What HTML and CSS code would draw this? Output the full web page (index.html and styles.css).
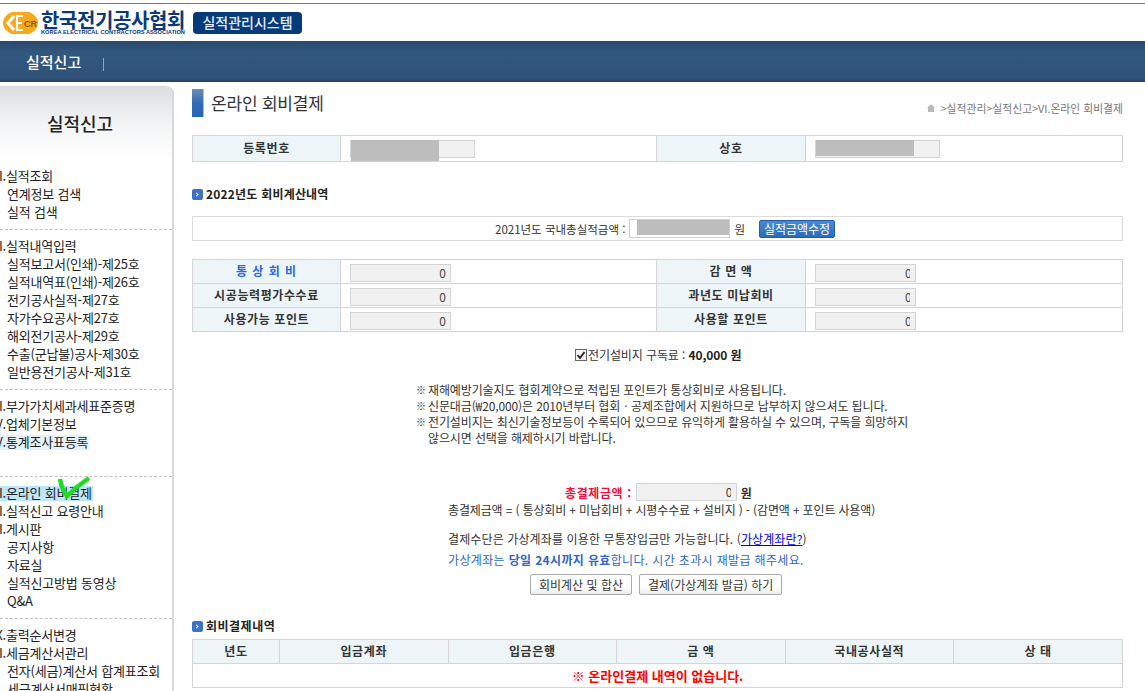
FILE: index.html
```html
<!DOCTYPE html>
<html lang="ko">
<head>
    <meta charset="UTF-8">
    <title>온라인 회비결제</title>
    <link rel="stylesheet" href="styles.css">
</head>
<body>

    <div class="top">
        <svg class="logo-mark" width="35" height="22" viewBox="0 0 35 22">
            <path d="M9 0H26C31 2 35 6 35 11C35 16 31 20 26 22H9C4 20 0 16 0 11C0 6 4 2 9 0Z" fill="#f7a81b"/>
            <path d="M11 4L5 11L11 18" fill="none" stroke="#fff" stroke-width="3"/>
            <path d="M20 4H14V18H20M14 11H19" fill="none" stroke="#fff" stroke-width="2.2"/>
            <text x="21" y="15" font-size="9" font-weight="bold" fill="#8a5a10" font-family="Liberation Sans">CR</text>
        </svg>
        <div class="logo-text">
            <div class="logo-ko">한국전기공사협회</div>
            <div class="logo-en">KOREA ELECTRICAL CONTRACTORS ASSOCIATION</div>
        </div>
        <div class="logo-badge">실적관리시스템</div>
    </div>

    <div class="nav">
        <span class="nav-item">실적신고</span>
        <span class="nav-sep"></span>
    </div>

    <div class="wrap">
        <div class="side">
            <div class="side-title">실적신고</div>

            <ul class="menu">
                <li class="m1"><span class="num">I.</span>실적조회</li>
                <li class="m2">연계정보 검색</li>
                <li class="m2">실적 검색</li>
            </ul>
            <ul class="menu">
                <li class="m1"><span class="num">II.</span>실적내역입력</li>
                <li class="m2">실적보고서(인쇄)-제25호</li>
                <li class="m2">실적내역표(인쇄)-제26호</li>
                <li class="m2">전기공사실적-제27호</li>
                <li class="m2">자가수요공사-제27호</li>
                <li class="m2">해외전기공사-제29호</li>
                <li class="m2">수출(군납불)공사-제30호</li>
                <li class="m2">일반용전기공사-제31호</li>
            </ul>
            <ul class="menu menu-b">
                <li class="m1"><span class="num">III.</span>부가가치세과세표준증명</li>
                <li class="m1"><span class="num">IV.</span>업체기본정보</li>
                <li class="m1 hl-light"><span class="num">V.</span>통계조사표등록</li>
            </ul>
            <ul class="menu">
                <li class="m1 hl"><span class="num">VI.</span>온라인 회비결제</li>
                <li class="m1"><span class="num">VII.</span>실적신고 요령안내</li>
                <li class="m1"><span class="num">VIII.</span>게시판</li>
                <li class="m2">공지사항</li>
                <li class="m2">자료실</li>
                <li class="m2">실적신고방법 동영상</li>
                <li class="m2">Q&amp;A</li>
            </ul>
            <ul class="menu">
                <li class="m1"><span class="num">IX.</span>출력순서변경</li>
                <li class="m1"><span class="num">XI.</span>세금계산서관리</li>
                <li class="m2">전자(세금)계산서 합계표조회</li>
                <li class="m2">세금계산서매핑현황</li>
            </ul>

            <svg class="check-mark" width="34" height="24" viewBox="0 0 34 24">
                <path d="M2 3C3 9 5 15 9 20C15 14 22 8 31 2" fill="none" stroke="#1fdc1f" stroke-width="4.5"/>
            </svg>
        </div>

        <div class="main">
            <div class="page-head">
                <span class="page-bar"></span>
                <h1>온라인 회비결제</h1>
                <div class="crumb">
                    <svg width="8" height="8" viewBox="0 0 8 8"><path d="M4 0L8 4H7V8H1V4H0Z" fill="#bbb"/></svg>
                    <span>&gt;실적관리&gt;실적신고&gt;VI.온라인 회비결제</span>
                </div>
            </div>

            <table class="grid first">
                <colgroup><col class="c1"><col class="c2"><col class="c3"><col></colgroup>
                <tr>
                    <th>등록번호</th>
                    <td><span class="field f125"><span class="mask m88"></span></span></td>
                    <th>상호</th>
                    <td><span class="field f125"><span class="mask m98"></span></span></td>
                </tr>
            </table>

            <h2 class="sec"><span class="sec-ico"></span>2022년도 회비계산내역</h2>

            <div class="amount-box">
                <span>2021년도 국내총실적금액 :</span>
                <span class="field-white"><span class="mask-white"></span></span>
                <span class="won">원</span>
                <button class="btn-blue">실적금액수정</button>
            </div>

            <table class="grid calc">
                <colgroup><col class="c1"><col class="c2"><col class="c3"><col></colgroup>
                <tr>
                    <th class="blue">통 상 회 비</th>
                    <td><span class="field f101">0</span></td>
                    <th>감 면 액</th>
                    <td><span class="field f101 cut"><span>0</span></span></td>
                </tr>
                <tr>
                    <th>시공능력평가수수료</th>
                    <td><span class="field f101">0</span></td>
                    <th>과년도 미납회비</th>
                    <td><span class="field f101 cut"><span>0</span></span></td>
                </tr>
                <tr>
                    <th>사용가능 포인트</th>
                    <td><span class="field f101">0</span></td>
                    <th>사용할 포인트</th>
                    <td><span class="field f101 cut"><span>0</span></span></td>
                </tr>
            </table>

            <div class="subscribe">
                <svg class="chk" width="12" height="12" viewBox="0 0 12 12">
                    <rect x="0.5" y="0.5" width="11" height="11" fill="#f4f4f4" stroke="#666"/>
                    <path d="M2.5 6L5 9L9.5 3" fill="none" stroke="#222" stroke-width="1.8"/>
                </svg>전기설비지 구독료 : <b>40,000 원</b>
            </div>

            <ul class="notes">
                <li>재해예방기술지도 협회계약으로 적립된 포인트가 통상회비로 사용됩니다.</li>
                <li>신문대금(₩20,000)은 2010년부터 협회ㆍ공제조합에서 지원하므로 납부하지 않으셔도 됩니다.</li>
                <li>전기설비지는 최신기술정보등이 수록되어 있으므로 유익하게 활용하실 수 있으며, 구독을 희망하지<br>않으시면 선택을 해제하시기 바랍니다.</li>
            </ul>

            <div class="total">
                <b class="red">총결제금액 :</b>
                <span class="field f101 cut"><span>0</span></span>
                <b>원</b>
            </div>
            <div class="formula">총결제금액 = ( 통상회비 + 미납회비 + 시평수수료 + 설비지 ) - (감면액 + 포인트 사용액)</div>

            <div class="pay-info">
                <p>결제수단은 가상계좌를 이용한 무통장입금만 가능합니다. (<a href="#">가상계좌란?</a>)</p>
                <p class="info-blue">가상계좌는 <b>당일 24시까지 유효</b>합니다. 시간 초과시 재발급 해주세요.</p>
            </div>

            <div class="btns">
                <button class="btn">회비계산 및 합산</button>
                <button class="btn">결제(가상계좌 발급) 하기</button>
            </div>

            <h2 class="sec sec2"><span class="sec-ico"></span>회비결제내역</h2>

            <table class="grid hist">
                <colgroup><col class="h1"><col class="h2"><col class="h2"><col class="h2"><col class="h2"><col></colgroup>
                <tr>
                    <th>년도</th>
                    <th>입금계좌</th>
                    <th>입금은행</th>
                    <th>금 액</th>
                    <th>국내공사실적</th>
                    <th>상 태</th>
                </tr>
                <tr>
                    <td colspan="6" class="empty">※ 온라인결제 내역이 없습니다.</td>
                </tr>
            </table>
        </div>
    </div>

</body>
</html>
```

FILE: styles.css
```css
html, body {
    height: 691px;
    overflow: hidden;
}
body {
    margin: 0;
    font-family: "Noto Sans CJK KR", "Noto Sans", sans-serif;
    font-size: 12px;
    color: #333;
    background-color: #fff;
}
ul {
    list-style: none;
    margin: 0;
    padding: 0;
}

/* 상단 */
.top {
    display: flex;
    align-items: center;
    box-sizing: border-box;
    height: 38px;
    margin-top: 3px;
    padding-left: 3px;
    border-top: 1px solid #777;
}
.logo-mark {
    margin-right: 3px;
}
.logo-text {
    width: 146px;
    margin-top: 1px;
}
.logo-ko {
    font-size: 20px;
    font-weight: 700;
    line-height: 18px;
    color: #0b3a78;
    letter-spacing: -0.4px;
    white-space: nowrap;
}
.logo-en {
    font-family: "Liberation Sans", sans-serif;
    font-size: 5.7px;
    font-weight: 700;
    line-height: 6px;
    color: #0b3a78;
    white-space: nowrap;
}
.logo-badge {
    width: 109px;
    height: 22px;
    margin-left: 6px;
    line-height: 21px;
    text-align: center;
    background-color: #063a78;
    border-radius: 4px;
    color: #e4eef8;
    font-size: 14px;
    font-weight: 500;
}
.nav {
    display: flex;
    align-items: center;
    height: 41px;
    padding-left: 26px;
    background: linear-gradient(#2a4a6e, #32587f 30%, #2f5278 90%, #26405e);
    color: #fff;
}
.nav-item {
    font-size: 15px;
    font-weight: 500;
    line-height: 36px;
}
.nav-sep {
    width: 1px;
    height: 13px;
    margin: 6px 0 0 22px;
    background-color: #8ea6bf;
}

/* 왼쪽 메뉴 */
.wrap {
    display: flex;
    align-items: flex-start;
}
.side {
    position: relative;
    width: 172px;
    height: 604px;
    margin-top: 4px;
    border: 1px solid #d8d8d8;
    border-left: 0;
    border-right-width: 2px;
    border-top-right-radius: 8px;
    overflow: hidden;
    color: #222;
    font-size: 13px;
    letter-spacing: -0.2px;
}
.side-title {
    box-sizing: border-box;
    height: 72px;
    margin-bottom: 8px;
    padding: 23px 12px 0 0;
    text-align: center;
    font-size: 18px;
    font-weight: 500;
    line-height: 27px;
    letter-spacing: 0;
    background: linear-gradient(#dcdfe2, #f4f5f6 55%, #fff);
}
.menu {
    margin-bottom: 7px;
    padding-bottom: 8px;
    border-bottom: 1px dashed #c4c4c4;
}
.menu:last-of-type {
    border-bottom: 0;
}
.menu-b {
    padding-bottom: 25px;
}
.menu li {
    height: 18px;
    line-height: 18px;
    white-space: nowrap;
}
.m1 {
    display: flex;
}
.m2 {
    padding-left: 7px;
}
.num {
    display: flex;
    flex: none;
    justify-content: flex-end;
    width: 6px;
    overflow: hidden;
}
.hl {
    width: 93px;
    background: linear-gradient(#bfe6fb, #bfe6fb) 0 2px / 100% 15px no-repeat;
}
.hl-light {
    width: 89px;
    background: linear-gradient(#e4f3fb, #e4f3fb) 0 2px / 100% 15px no-repeat;
}
.check-mark {
    position: absolute;
    left: 58px;
    top: 389px;
}

/* 본문 */
.main {
    width: 931px;
    margin-left: 18px;
}
.page-head {
    display: flex;
    align-items: flex-start;
    box-sizing: border-box;
    height: 53px;
    padding-top: 7px;
}
.page-bar {
    box-sizing: border-box;
    width: 12px;
    height: 28px;
    margin-right: 7px;
    background: linear-gradient(#6f8db0, #2f6cb8 50%, #2a66b4);
    border-right: 1px solid #bbb;
}
h1 {
    margin: 0;
    font-size: 17px;
    font-weight: 400;
    line-height: 28px;
    letter-spacing: -0.2px;
    color: #333;
}
.crumb {
    display: flex;
    align-items: center;
    gap: 6px;
    margin-left: auto;
    margin-top: 11px;
    font-size: 10.8px;
    line-height: 16px;
    color: #777;
    white-space: nowrap;
}
.grid {
    width: 931px;
    border-collapse: collapse;
    table-layout: fixed;
    background-color: #fff;
}
.grid th, .grid td {
    height: 18px;
    border: 1px solid #d4d4d4;
    padding: 0;
    line-height: 15px;
}
.grid th {
    padding-bottom: 2px;
    background-color: #edf5f8;
    font-size: 12px;
    font-weight: 700;
    color: #333;
    letter-spacing: 0.6px;
}
.grid td {
    padding: 4px 0 1px 9px;
    vertical-align: top;
}
.first td {
    padding-bottom: 3px;
}
.c1 {
    width: 148px;
}
.c2 {
    width: 316px;
}
.c3 {
    width: 149px;
}
.field {
    display: block;
    position: relative;
    box-sizing: border-box;
    height: 18px;
    line-height: 16px;
    background-color: #f1f1f1;
    border: 1px solid #d4d4d4;
    text-align: right;
    padding-right: 4px;
    font-size: 12px;
    color: #444;
}
.f125 {
    width: 125px;
}
.f101 {
    width: 101px;
    flex: none;
}
/* 입력칸 끝에서 잘린 0 */
.cut {
    padding-right: 5px;
}
.cut span {
    display: inline-block;
    width: 5px;
    overflow: hidden;
    vertical-align: top;
    text-align: left;
}
.mask {
    position: absolute;
    left: 0;
    top: -1px;
    background-color: #bdbdbd;
}
.m88 {
    width: 88px;
    height: 21px;
}
.m98 {
    width: 98px;
    height: 16px;
}
.sec {
    display: flex;
    align-items: center;
    margin: 24px 0 14px;
    font-size: 12px;
    font-weight: 700;
    line-height: 16px;
    letter-spacing: 0.2px;
    color: #222;
}
.sec-ico {
    position: relative;
    width: 11px;
    height: 11px;
    margin-right: 3px;
    border-radius: 2px;
    background-color: #3a74c0;
}
.sec-ico::after {
    content: "";
    position: absolute;
    left: 3px;
    top: 4px;
    width: 2px;
    height: 2px;
    border-top: 1px solid #fff;
    border-right: 1px solid #fff;
    transform: rotate(45deg);
}
.sec2 {
    margin: 0 0 5px;
    letter-spacing: 0.5px;
}
.amount-box {
    display: flex;
    align-items: center;
    box-sizing: border-box;
    height: 25px;
    padding-left: 302px;
    border: 1px solid #dcdcdc;
    font-size: 11.5px;
    white-space: nowrap;
}
.field-white {
    box-sizing: border-box;
    width: 101px;
    height: 19px;
    margin-left: 4px;
    border: 1px solid #cfcfcf;
    padding-left: 7px;
}
.mask-white {
    display: block;
    height: 15px;
    background-color: #bdbdbd;
}
.won {
    margin: 0 14px 0 4px;
}
.btn-blue {
    width: 76px;
    height: 18px;
    padding: 0;
    border: 1px solid #1f5fa8;
    border-radius: 2px;
    background: linear-gradient(#4a8ad4, #2b6cb8);
    color: #fff;
    font-family: inherit;
    font-size: 12px;
    line-height: 15px;
}
.calc {
    margin-top: 18px;
}
.grid .blue {
    color: #2a6ae0;
    letter-spacing: 1px;
}
.subscribe {
    height: 16px;
    margin-top: 15px;
    padding-left: 383px;
    line-height: 16px;
    letter-spacing: -0.1px;
    white-space: nowrap;
}
.chk {
    vertical-align: -1px;
    margin-right: 1px;
}
.subscribe b {
    color: #222;
}
.notes {
    margin: 19px 0 0 224px;
    line-height: 16px;
    letter-spacing: -0.12px;
    white-space: nowrap;
}
.notes li {
    position: relative;
    padding-left: 12px;
}
.notes li::before {
    content: "※";
    position: absolute;
    left: 0;
    font-size: 10px;
}
.total {
    display: flex;
    align-items: center;
    gap: 4px;
    height: 18px;
    margin-top: 37px;
    padding-left: 373px;
}
.total b {
    color: #333;
}
.total .red {
    color: #f01040;
    letter-spacing: 0.6px;
}
.formula {
    padding-left: 256px;
    line-height: 18px;
    letter-spacing: -0.15px;
    white-space: nowrap;
}
.pay-info {
    margin-top: 9px;
    padding-left: 256px;
    line-height: 21px;
    letter-spacing: 0.12px;
}
.pay-info p {
    margin: 0;
}
.pay-info a {
    color: #0000ee;
}
.info-blue {
    color: #2f66c8;
    letter-spacing: 0.35px;
}
.btns {
    display: flex;
    gap: 7px;
    margin: 4px 0 23px;
    padding-left: 338px;
}
.btn {
    height: 21px;
    padding: 0 8px;
    border: 1px solid #aaa;
    border-radius: 2px;
    background: linear-gradient(#fff 60%, #ececec);
    font-family: inherit;
    font-size: 12px;
    line-height: 17px;
    color: #333;
}
.hist th {
    height: 21px;
}
.h1 {
    width: 87px;
}
.h2 {
    width: 168.5px;
}
.hist .empty {
    height: 23px;
    padding: 0;
    text-align: center;
    vertical-align: middle;
    color: #f00;
    font-weight: 700;
    font-size: 13px;
}
```
